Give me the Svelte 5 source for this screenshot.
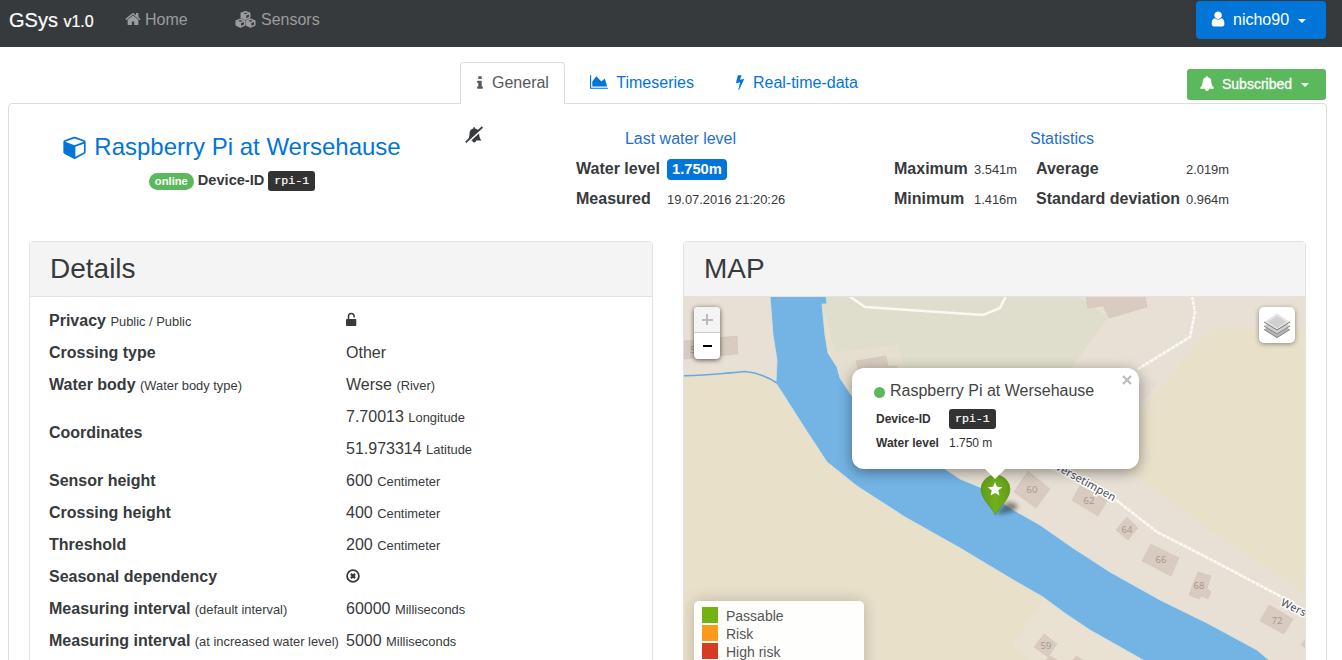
<script>
  const details = [
    { label: 'Privacy', hint: 'Public / Public', icon: 'unlock' },
    { label: 'Crossing type', values: [['Other', '']] },
    { label: 'Water body', hint: '(Water body type)', values: [['Werse', '(River)']] },
    { label: 'Coordinates', values: [['7.70013', 'Longitude'], ['51.973314', 'Latitude']] },
    { label: 'Sensor height', values: [['600', 'Centimeter']] },
    { label: 'Crossing height', values: [['400', 'Centimeter']] },
    { label: 'Threshold', values: [['200', 'Centimeter']] },
    { label: 'Seasonal dependency', icon: 'no' },
    { label: 'Measuring interval', hint: '(default interval)', values: [['60000', 'Milliseconds']] },
    { label: 'Measuring interval', hint: '(at increased water level)', values: [['5000', 'Milliseconds']] }
  ];
  const legend = [
    ['Passable', '#72b313'],
    ['Risk', '#f99a1c'],
    ['High risk', '#d63c22']
  ];
  const river =
    'M770 296 L773 335 L777 360 L776 383 L806 430 L827 462 L857 486 L905 517 L960 548 L1010 578 L1043 597 L1066 614 L1090 630 L1145 661 L1270 661 L1257 650 L1207 623 L1160 600 L1110 572 L1073 548 L1040 525 L1010 508 L982 488 L960 479 L945 469 L900 440 L852 396 L840 378 L837 367 L828 353 L825 335 L822 304 L827 304 L826 296Z';
</script>

<header class="navbar">
  <div class="brand">GSys <small>v1.0</small></div>
  <a class="nav home" href="#home">
    <svg width="16" height="16" viewBox="40 40 1712 1712"><path d="M1472 992v480q0 26-19 45t-45 19h-384v-384h-256v384h-384q-26 0-45-19t-19-45v-480q0-1 .5-3t.5-3l575-474 575 474q1 2 1 6zm223-69l-62 74q-8 9-21 11h-3q-13 0-21-7l-692-577-692 577q-12 8-24 7-13-2-21-11l-62-74q-8-10-7-23.5t11-21.5l719-599q32-26 76-26t76 26l244 204v-195q0-14 9-23t23-9h192q14 0 23 9t9 23v408l219 182q10 8 11 21.5t-7 23.5z" /></svg>
    <span>Home</span>
  </a>
  <a class="nav sensors" href="#sensors">
    <svg width="21" height="17" viewBox="0 0 21 17">
      <g fill="#373a3c" stroke="#9b9c9e" stroke-width="1.5" stroke-linejoin="round">
        {#each [[10.5, 4.4], [5.4, 12], [15.6, 12]] as [x, y]}
          <g transform="translate({x} {y})">
            <path d="M0 -3.7L4.2 -2.1V2.1L0 4L-4.2 2.1V-2.1Z" />
            <path d="M-4.2 -2.1L0 -.4L4.2 -2.1M0 -.4V4" fill="none" />
            <path d="M-4.2 -2.1L0 -.4V4L-4.2 2.1Z" fill="#9b9c9e" stroke="none" />
          </g>
        {/each}
      </g>
    </svg>
    <span>Sensors</span>
  </a>
  <button class="user">
    <svg width="16" height="16" viewBox="90 90 1600 1620"><path d="M1536 1399q0 109-62.5 187t-150.5 78h-854q-88 0-150.5-78t-62.5-187q0-85 8.5-160.5t31.5-152 58.5-131 94-89 134.5-34.5q131 128 313 128t313-128q76 0 134.5 34.5t94 89 58.5 131 31.5 152 8.5 160.5zm-256-887q0 159-112.5 271.5t-271.5 112.5-271.5-112.5-112.5-271.5 112.5-271.5 271.5-112.5 271.5 112.5 112.5 271.5z" /></svg>
    <span>nicho90</span><i class="caret"></i>
  </button>
</header>

<main>
  <div class="toolbar">
    <nav class="tabs">
      <a class="tab active" href="#general">
        <svg width="16" height="16" viewBox="0 0 1792 1792"><path d="M1216 1344v128q0 26-19 45t-45 19h-512q-26 0-45-19t-19-45v-128q0-26 19-45t45-19h64v-384h-64q-26 0-45-19t-19-45v-128q0-26 19-45t45-19h384q26 0 45 19t19 45v576h64q26 0 45 19t19 45zm-128-1152v192q0 26-19 45t-45 19h-256q-26 0-45-19t-19-45v-192q0-26 19-45t45-19h256q26 0 45 19t19 45z" /></svg>
        <span>General</span>
      </a>
      <a class="tab series" href="#timeseries">
        <svg width="18.3" height="16" viewBox="0 0 2048 1792"><path d="M2048 1536v128h-2048v-1536h128v1408h1920zm-384-1024l256 896h-1664v-576l448-576 576 576z" /></svg>
        <span>Timeseries</span>
      </a>
      <a class="tab live" href="#realtime">
        <svg width="16" height="16" viewBox="0 0 1792 1792"><path d="M1333 566q18 20 7 44l-540 1157q-13 25-42 25-4 0-14-2-17-5-25.5-19t-4.5-30l197-808-406 101q-4 1-12 1-18 0-31-11-18-15-13-39l201-825q4-14 16-23t28-9h328q19 0 32 12.5t13 29.5q0 8-5 18l-171 463 396-98q8-2 12-2 19 0 34 15z" /></svg>
        <span>Real-time-data</span>
      </a>
    </nav>
    <button class="subscribe">
      <svg width="14" height="15" viewBox="0 0 1664 1792"><path d="M1664 1408q0 52-38 90t-90 38h-448q0 106-75 181t-181 75-181-75-75-181h-448q-52 0-90-38t-38-90q50-42 91-88t85-119.5 74.5-158.5 50-206 19.5-260q0-152 117-282.5t307-158.5q-8-19-8-39 0-40 28-68t68-28 68 28 28 68q0 20-8 39 190 28 307 158.5t117 282.5q0 139 19.5 260t50 206 74.5 158.5 85 119.5 91 88z" /></svg>
      <span>Subscribed</span><i class="caret"></i>
    </button>
  </div>

  <div class="panel">
    <section class="summary">
      <div class="device">
        <h1>
          <svg width="23" height="24" viewBox="0 0 1664 1792"><path d="M896 1629l640-349v-636l-640 233v752zm-64-865l698-254-698-254-698 254zm832-252v768q0 35-18 65t-49 47l-704 384q-28 16-61 16t-61-16l-704-384q-31-17-49-47t-18-65v-768q0-40 23-73t61-47l704-256q22-8 44-8t44 8l704 256q38 14 61 47t23 73z" /></svg>
          <span>Raspberry Pi at Wersehause</span>
        </h1>
        <div class="ident"><span class="pill">online</span><b>Device-ID</b><code>rpi-1</code></div>
      </div>
      <div class="muted-bell">
        <svg width="18" height="18" viewBox="0 0 18 18">
          <path d="M2.2 14.5C4.4 12.5 4.400 9.500 4.500 7.200C4.700 4.500 6.300 3 8.400 2.600V1.200H10V2.600C12.500 3 14 4.800 14.100 7.200C14.200 10.300 14.600 12.600 16.600 14.500H11.200Q11 16.500 9.200 16.500T7.200 14.500Z" fill="#373a3c" />
          <path d="M1.500 17.100L17.600 2.300" stroke="#fff" stroke-width="2.600" />
          <path d="M.7 16.300L17.400 1" stroke="#373a3c" stroke-width="1.700" />
        </svg>
      </div>
      <div class="level">
        <h2>Last water level</h2>
        <div class="line"><b>Water level</b><span class="tag">1.750m</span></div>
        <div class="line"><b>Measured</b><small>19.07.2016 21:20:26</small></div>
      </div>
      <div class="stats">
        <h2>Statistics</h2>
        <div class="line"><b>Maximum</b><small>3.541m</small><b>Average</b><small>2.019m</small></div>
        <div class="line"><b>Minimum</b><small>1.416m</small><b>Standard deviation</b><small>0.964m</small></div>
      </div>
    </section>

    <div class="columns">
      <section class="card">
        <h3>Details</h3>
        <div class="rows">
          {#each details as row}
            <div class="row">
              <div class="label"><b>{row.label}</b>{#if row.hint}&nbsp;<small>{row.hint}</small>{/if}</div>
              <div class="values">
                {#if row.icon === 'unlock'}
                  <div class="icon">
                    <svg width="12" height="15" viewBox="0 0 12 15"><path d="M2.5 8V4.3A2.8 2.8 0 0 1 8.1 4.3V5" fill="none" stroke="#373a3c" stroke-width="1.5" stroke-linecap="round" /><rect y="7" width="10.3" height="7" rx=".8" fill="#373a3c" /></svg>
                  </div>
                {:else if row.icon === 'no'}
                  <div class="icon">
                    <svg width="14" height="14" viewBox="0 0 14 14"><circle cx="7" cy="7" r="5.9" fill="none" stroke="#373a3c" stroke-width="1.8" /><path d="M4.9 4.9L9.1 9.1M9.1 4.9L4.9 9.1" stroke="#373a3c" stroke-width="2.2" /></svg>
                  </div>
                {:else}
                  {#each row.values as [value, unit]}
                    <div>{value}{#if unit}&nbsp;<small>{unit}</small>{/if}</div>
                  {/each}
                {/if}
              </div>
            </div>
          {/each}
        </div>
      </section>

      <section class="card mapcard">
        <h3>MAP</h3>
        <div class="map">
          <svg class="tiles" width="622" height="363" viewBox="684 297 622 363">
            <defs>
              <filter id="soft" x="-50%" y="-50%" width="200%" height="200%"><feGaussianBlur stdDeviation="2" /></filter>
              <linearGradient id="pin" x1="0" y1="0" x2="1" y2="0"><stop offset="0" stop-color="#63991a" /><stop offset=".5" stop-color="#70b01d" /><stop offset="1" stop-color="#649c19" /></linearGradient>
            </defs>
            <rect x="684" y="297" width="622" height="363" fill="#e8e0c9" />
            <path d="M684 297H780V383L776 383Q762 374 745 372L684 376Z" fill="#e8e0d4" />
            <path d="M820 297H1087L1108 318L1072 368H840Z" fill="#dfddcb" />
            <path d="M1080 297H1306V328H1222L1200 340L1167 380L1139 412L1100 412L1065 375L1108 318Z" fill="#e8e0d4" />
            <path d="M828 353L898 345L905 370L930 400L880 420L840 380Z" fill="#e6dfd0" />
            <path d="M900 440H1070L1140 478L1200 523L1306 594V661H1240L960 490Z" fill="#e8e0d4" />
            <path d="M1043 599L1012 645L1029 661H1145L1090 630Z" fill="#e9e1d2" />
            <path d="M1140 372L1158 384L1142 402Z" fill="#e5dcd2" />
            <g fill="#d9cbbf" stroke="#d0c0b4" stroke-width=".5">
              <path d="M684 341L737 336L738 354L684 359Z" />
              <path d="M856 361L886 356L888 366L897 366V378H860Z" />
              <path d="M1086 296L1088 308L1103 306L1109 318L1147 307L1145 296Z" />
              <path d="M1028 471L1050 489L1036 508L1014 492Z" />
              <path d="M1081 484L1107 501L1098 516L1072 500Z" />
              <path d="M1127 517L1138 528L1128 540L1116 530Z" />
              <path d="M1151 544L1179 558L1171 576L1142 561Z" />
              <path d="M1198 572L1211 576L1207 588L1211 592L1208 599L1202 596L1199 599L1189 595L1193 584Z" />
              <path d="M1269 605L1293 619L1284 634L1260 621Z" />
              <path d="M1044 634L1057 644L1048 657L1034 647Z" />
              <path d="M1306 638L1301 645L1306 648ZM1050 656L1057 660H1046ZM1076 656L1083 660H1073Z" />
            </g>
            <path d={river} fill="#73b4e5" stroke="#d9e4df" stroke-width=".8" />
            <path d="M684 375.8Q705 375 717 374T745 371.5Q762 373 777 383" fill="none" stroke="#69a9dc" stroke-width="1.6" />
            <path d="M849 296L865 307L983 315L1000 308L1006 296" fill="none" stroke="#faf8f0" stroke-width="2.6" />
            <path d="M1192 296L1195 312L1190 337L1138 369" fill="none" stroke="#fcfaf7" stroke-width="2.6" stroke-dasharray="4 1" />
            <path d="M1116 500L1157 532L1208 558L1282 597" fill="none" stroke="#fcfaf5" stroke-width="2.6" stroke-dasharray="4 .8" />
            <g class="num">
              <text x="1032" y="493">60</text><text x="1089" y="504">62</text><text x="1127" y="533">64</text>
              <text x="1161" y="563">66</text><text x="1199" y="589">68</text><text x="1277" y="624">72</text>
              <text x="1046" y="649">59</text><text x="693" y="353">5</text>
            </g>
            <g class="street">
              <text transform="translate(1051 467) rotate(29)">Wersetimpen</text>
              <text transform="translate(1280 605) rotate(26)">Wers</text>
            </g>
            <path d="M996 514L1007 502Q1020 503 1017 508Q1012 514 996 514Z" fill="#222" opacity=".5" filter="url(#soft)" />
            <path d="M995.5 515C993 509 981 499 981 489.500A14.500 14.500 0 0 1 1010 489.500C1010 499 998 509 995.500 515Z" fill="url(#pin)" stroke="#578d16" stroke-width=".6" />
            <path d="M995 482L997 486.800L1002.200 487.200L998.200 490.600L999.500 495.600L995 492.900L990.500 495.600L991.800 490.600L987.800 487.200L993 486.800Z" fill="#fff" />
          </svg>
          <div class="zoom"><span class="off"><i></i><i class="v"></i></span><span><i></i></span></div>
          <div class="layers">
            <svg width="28" height="28" viewBox="0 0 28 28">
              <path d="M1 18.500L14 10L27 18.500L14 27Z" fill="#b5b5b5" /><path d="M1 18.500L14 26.500L27 18.500" fill="none" stroke="#858585" />
              <path d="M1 15L14 7L27 15L14 23.500Z" fill="#cfcfcf" /><path d="M1 15L14 23L27 15" fill="none" stroke="#858585" />
              <path d="M1 11L14 2.500L27 11L14 19Z" fill="#e4e4e4" /><path d="M5 11L14 5L23 11L14 17Z" fill="#d0d0d0" /><path d="M1 11L14 19L27 11" fill="none" stroke="#777" />
            </svg>
          </div>
          <div class="popup">
            <svg class="close" width="10" height="10" viewBox="0 0 10 10"><path d="M1 1L9 9M9 1L1 9" stroke="#bdbdbd" stroke-width="2.3" /></svg>
            <div class="ptitle"><i></i>Raspberry Pi at Wersehause</div>
            <div class="pline"><b>Device-ID</b><code>rpi-1</code></div>
            <div class="pline"><b>Water level</b><span>1.750 m</span></div>
          </div>
          <div class="legend">
            {#each legend as [name, color]}
              <div><i style="background:{color}"></i>{name}</div>
            {/each}
          </div>
        </div>
      </section>
    </div>
  </div>
</main>

<style>
  :global(body) { margin: 0; background: #fff; overflow: hidden; }
  :global(#app) { height: 660px; overflow: hidden; font: 16px/24px "Liberation Sans", Arial, sans-serif; color: #373a3c; }
  * { box-sizing: border-box; }
  svg { fill: currentColor; flex: none; display: block; }
  a { text-decoration: none; }
  small { font-size: 12.9px; }
  button { font: inherit; border: 0; color: #fff; display: flex; align-items: center; }
  h1, h2, h3 { margin: 0; font-weight: 400; }

  .navbar { height: 47px; background: #373a3c; display: flex; align-items: flex-start; padding-right: 16px; }
  .brand { width: 125px; padding: 8px 0 0 9px; font-size: 20px; color: #fff; white-space: nowrap; -webkit-text-stroke: .2px; }
  .brand small { font-size: 16px; }
  .nav { display: flex; align-items: center; gap: 4px; color: #9b9c9e; margin-top: 8px; }
  .home { width: 110px; }
  .home svg { margin-top: -2px; }
  .sensors { gap: 5px; }
  .sensors svg { margin-top: -2px; }
  .user { margin: 1px 0 0 auto; width: 130px; height: 38px; background: #0275d8; border-radius: 4px; padding: 0 0 0 14px; }
  .user span { margin-left: 7px; }
  .user svg { margin-top: -2px; }
  .caret { border: 4px solid transparent; border-top-color: currentColor; border-bottom: 0; margin-left: 9px; margin-top: 2px; }

  main { padding: 15px 15px 0 8px; }
  .toolbar { display: flex; height: 42px; position: relative; z-index: 1; }
  .tabs { display: flex; margin-left: 452px; }
  .tab { display: flex; align-items: center; height: 41px; color: #0275d8; }
  .tab svg { margin-top: -1px; }
  .tab.active { width: 105px; height: 42px; border: 1px solid #ddd; border-bottom: 0; border-radius: 4px 4px 0 0; background: #fff; color: #55595c; padding: 0 0 1px 11px; }
  .active span { margin-left: 4px; }
  .series { margin-left: 25px; }
  .series span { margin-left: 8px; }
  .live { margin-left: 38px; }
  .live span { margin-left: 5px; }
  .subscribe { margin: 7px 1px 0 auto; width: 139px; height: 31px; background: #5cb85c; border-radius: 3px; padding: 0 0 2px 13px; font-size: 14px; -webkit-text-stroke: .3px; }
  .subscribe span { margin-left: 8px; }

  .panel { margin-top: -1px; border: 1px solid #ddd; border-radius: 4px; height: 620px; padding: 0 20px; }
  .summary { height: 137px; display: flex; }
  .device { width: 406px; display: flex; flex-direction: column; align-items: center; padding-top: 28px; }
  h1 { display: flex; align-items: center; gap: 8px; font-size: 24px; line-height: 30px; color: #0275d8; white-space: nowrap; }
  .ident { display: flex; align-items: center; margin-top: 9px; line-height: 20px; font-size: 14.6px; }
  .ident b { margin: -2px 4px 0; }
  .pill { background: #5cb85c; color: #fff; font: bold 11.2px/17px "Liberation Sans", sans-serif; border-radius: 9px; padding: 0 6px; }
  code { font: 11.6px/20px "Liberation Mono", monospace; color: #fff; background: #333; border-radius: 3px; padding: 0 6px; -webkit-text-stroke: .2px; }
  .muted-bell { width: 141px; padding: 22px 0 0 30px; }
  .level { width: 318px; }
  .stats { width: 336px; }
  h2 { font-size: 16px; line-height: 24px; margin: 23px 0 3px; color: #1f6fc9; text-align: center; }
  .level h2 { width: 209px; }
  .line { display: flex; align-items: center; height: 30px; white-space: nowrap; }
  .line small { position: relative; top: 1px; }
  .level b { width: 91px; }
  .tag { background: #0275d8; color: #fff; font-weight: bold; font-size: 14.7px; line-height: 21px; border-radius: 4px; padding: 0 5px; }
  .stats b:nth-child(1) { flex: none; width: 80px; }
  .stats b:nth-child(3) { flex: none; width: 150px; }
  .stats small { flex: none; width: 62px; }

  .columns { display: flex; gap: 30px; }
  .card { width: 624px; height: 480px; border: 1px solid #e2e2e2; border-radius: 4px 4px 0 0; }
  .mapcard { width: 623px; }
  h3 { height: 55px; background: #f4f4f4; border-bottom: 1px solid #e2e2e2; font-size: 28px; line-height: 53px; padding-left: 20px; }
  .rows { padding: 8px 0 0 19px; }
  .row { display: flex; align-items: center; line-height: 32px; white-space: nowrap; }
  .label { width: 297px; }
  .row small { line-height: 1; }
  .icon { height: 32px; display: flex; align-items: center; padding-bottom: 3px; }

  .map { position: relative; height: 424px; overflow: hidden; }
  .tiles { position: absolute; left: 0; top: 0; }
  .num { font: 9.5px "Noto Sans", sans-serif; fill: #a99a8f; text-anchor: middle; }
  .street { font: 11px "Noto Sans", sans-serif; fill: #4a4a55; stroke: #fff; stroke-width: 3px; paint-order: stroke; letter-spacing: .2px; }
  .zoom { position: absolute; left: 10px; top: 10px; width: 26px; border-radius: 4px; background: #fff; box-shadow: 0 1px 5px rgba(0,0,0,.65); overflow: hidden; }
  .zoom span { display: grid; place-items: center; height: 26px; color: #000; }
  .zoom .off { background: #f4f4f4; border-bottom: 1px solid #ccc; color: #bbb; }
  .zoom i { grid-area: 1 / 1; width: 9px; height: 2px; background: currentColor; }
  .zoom .off i { width: 11px; }
  .zoom .off .v { width: 2px; height: 11px; }
  .layers { position: absolute; left: 575px; top: 10px; width: 36px; height: 36px; display: grid; place-items: center; background: #fff; border-radius: 5px; box-shadow: 0 1px 5px rgba(0,0,0,.4); }
  .popup { position: absolute; left: 168px; top: 71px; width: 287px; height: 101px; border-radius: 12px; background: #fff; box-shadow: 0 3px 14px rgba(0,0,0,.4); padding: 11px 0 0 24px; }
  .popup::after { content: ""; position: absolute; left: 132px; top: 100px; border: 11px solid transparent; border-top-color: #fff; border-bottom: 0; }
  .close { position: absolute; right: 7px; top: 7px; }
  .ptitle { display: flex; align-items: center; height: 24px; color: #444; white-space: nowrap; }
  .ptitle i { width: 11px; height: 11px; border-radius: 50%; background: #5cb85c; margin: 2px 5px 0 -2px; }
  .pline { display: flex; align-items: center; height: 24px; font-size: 12px; color: #333; }
  .ptitle + .pline { margin-top: 4px; }
  .pline b { width: 73px; }
  .legend { position: absolute; left: 10px; top: 304px; width: 170px; height: 90px; padding: 6px 8px; background: rgba(255,255,255,.94); border-radius: 5px; box-shadow: 0 0 15px rgba(0,0,0,.2); font-size: 14px; line-height: 18px; color: #555; }
  .legend div { display: flex; }
  .legend i { width: 16px; height: 16px; margin-right: 8px; }
</style>
